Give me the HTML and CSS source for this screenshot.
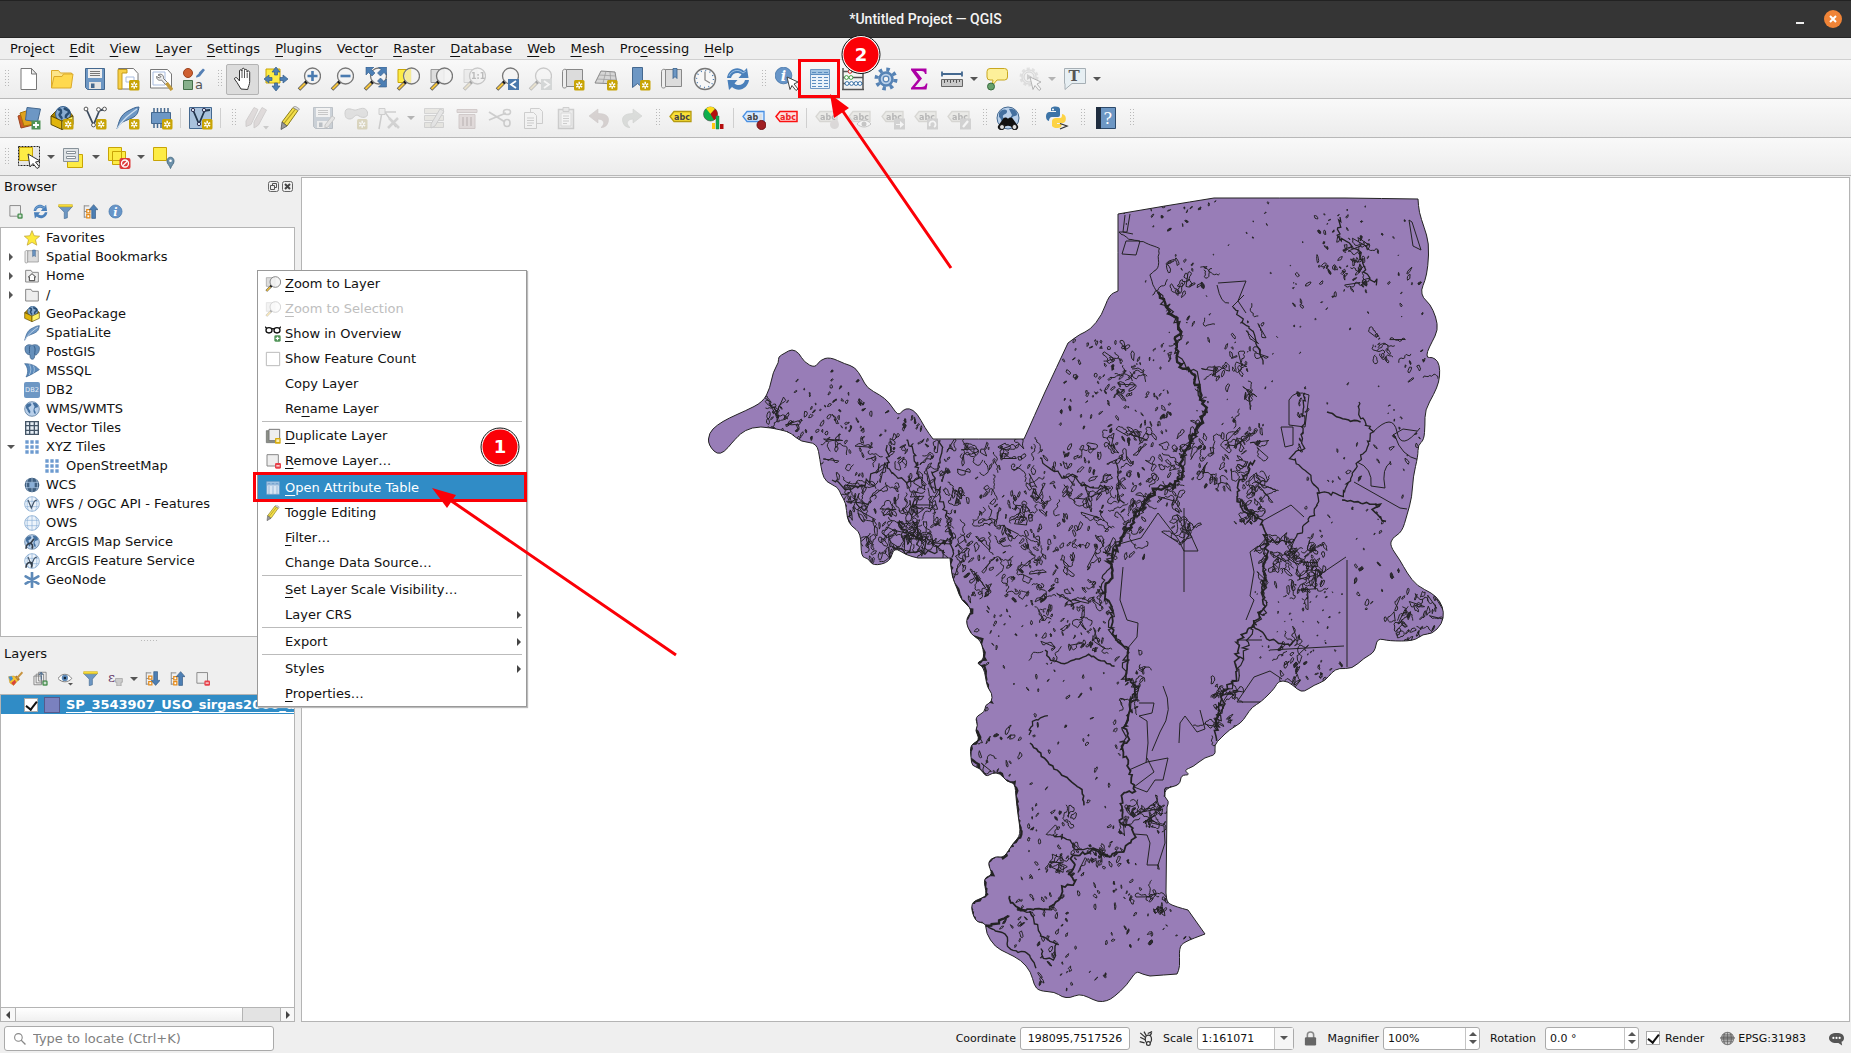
FILE: index.html
```html
<!DOCTYPE html>
<html lang="en">
<head>
<meta charset="utf-8">
<title>*Untitled Project — QGIS</title>
<link rel="stylesheet" href="styles.css">
</head>
<body>
<svg class="sprite" aria-hidden="true">
  <symbol id="star" viewBox="0 0 24 24"><rect x="13" y="13" width="10.500" height="10.500" rx="1.500" fill="#c8a406"/><path d="M18.200 14.800v7M15.200 16.600l6 3.500M15.200 20.100l6-3.500" stroke="#fff" stroke-width="1.500"/><circle cx="18.200" cy="18.300" r="1" fill="#c8a406"/></symbol>
  <symbol id="lens" viewBox="0 0 24 24"><path d="M10 14.500L2 22.500" stroke="#555" stroke-width="3.600"/><path d="M8 16.500l-5.500 5.500" stroke="#f3c33c" stroke-width="2.200"/><path d="M10.500 13.500l-2 2.500" stroke="#111" stroke-width="3"/><circle cx="15.500" cy="9" r="8" fill="#f3f3f3" fill-opacity=".85" stroke="#777" stroke-width="1.300"/></symbol>
  <symbol id="new" viewBox="0 0 24 24"><path d="M4 1.500h10.500l5 5.500v15.500H4z" fill="#fff" stroke="#777"/><path d="M14.500 1.500V7h5z" fill="#eee" stroke="#777"/></symbol>
  <symbol id="open" viewBox="0 0 24 24"><path d="M1.500 21V3.500h7l2 2.500h11v4" fill="#fce58a" stroke="#dba92a"/><path d="M1.500 21L4 9.500h8l1.500-2.500h9.500L21 21z" fill="#ffd94f" stroke="#dba92a"/></symbol>
  <symbol id="save" viewBox="0 0 24 24"><path d="M2.500 1.500h19v21h-17l-2-2z" fill="#6d97c4" stroke="#44688f"/><path d="M5 2h14v9H5z" fill="#eee"/><path d="M7 4.500h10M7 6.500h10M7 8.500h10" stroke="#777"/><path d="M6 15h12v7H6z" fill="#e4e4e4"/><path d="M8 16.500h3.500V21H8z" fill="#44688f"/></symbol>
  <symbol id="layout" viewBox="0 0 24 24"><path d="M2.500 1.500h15l4.500 5v15.500H2.500z" fill="#fff" stroke="#777"/><path d="M2 2.500h9v3.500H6V22H2z" fill="#f8d048" stroke="#c39b1a"/><path d="M10 10h8v5h-8z" fill="none" stroke="#a9bde0"/><use href="#star"/></symbol>
  <symbol id="layman" viewBox="0 0 24 24"><path d="M1.500 2.500h17l4 4.500v14H1.500z" fill="#fff" stroke="#777"/><path d="M4 5h12v13H4z" fill="none" stroke="#a9bde0"/><path d="M9 8c3-2 6 0 5.500 3.500l4 4-2 2-4-4.500c-2.500 1-5-.5-5-3.500l3 1.500 1.500-1.500z" fill="#eee" stroke="#777"/><path d="M17.500 16l5.500 7" stroke="#c39b3a" stroke-width="3.500"/></symbol>
  <symbol id="stylem" viewBox="0 0 24 24"><circle cx="6" cy="6" r="4.500" fill="#cf6032" stroke="#9c431e"/><path d="M14 10.500c0-3 3-3 3-5l4-4 2 1.500-4 5c-1 2-3 2-5 2.500z" fill="#5580b5"/><path d="M1.500 13.500h9v9h-9z" fill="#87b08c" stroke="#45704a"/><text x="13" y="22" class="t-a">a</text></symbol>
  <symbol id="hand" viewBox="0 0 24 24"><path d="M8 22L4 15.500 1.500 12c0-1.500 1.500-2 2.500-1l2.500 3V4c0-1.700 2.500-1.700 2.500 0V2.500C9 .800 11.500.800 11.500 2.500v1c0-1.500 2.500-1.500 2.500 0V5c0-1.500 2.700-1.500 2.700.500v9c0 3-1.500 5-2 8z" transform="translate(2 0)" fill="#fff" stroke="#333"/><path d="M11 4v7M13.500 4v7M16.200 5.500V11" stroke="#555"/></symbol>
  <symbol id="pansel" viewBox="0 0 24 24"><path d="M2 2h14v14H2z" fill="#fdec45" stroke="#c8a406"/><path d="M12 0l4 5h-2.500v3h-3V5H8zM12 24l4-5h-2.500v-3h-3v3H8zM0 12l5-4v2.500h3v3H5V16zM24 12l-5-4v2.500h-3v3h3V16z" fill="#4d7fb4" stroke="#355d88" stroke-width=".7"/></symbol>
  <symbol id="zin" viewBox="0 0 24 24"><use href="#lens"/><path d="M15.500 4v10M10.500 9h10" stroke="#4a7bb0" stroke-width="2.600"/></symbol>
  <symbol id="zout" viewBox="0 0 24 24"><use href="#lens"/><path d="M10.500 9h10" stroke="#4a7bb0" stroke-width="2.600"/></symbol>
  <symbol id="zfull" viewBox="0 0 24 24"><use href="#lens"/><path d="M3 0h8L8.500 2.500 12 6l-3 3-3.500-3.500L3 8zM23.500 0v8L21 5.500 17.500 9l-3-3L18 2.500 15.500 0zM23.500 20h-8l2.500-2.500-3.500-3.500 3-3 3.500 3.500 2.500-2.500z" fill="#4d7fb4" stroke="#355d88" stroke-width=".6"/></symbol>
  <symbol id="zsel" viewBox="0 0 24 24"><path d="M2 2.500h13v13H2z" fill="#fdec45" stroke="#c8a406"/><use href="#lens"/><path d="M15 1.800v14a7 7 0 0 1-6-6c-.5-4 2-7.500 6-8z" fill="#f5e87a" opacity=".7"/></symbol>
  <symbol id="zlay" viewBox="0 0 24 24"><path d="M2 2.500h13v13H2z" fill="#ddd" stroke="#999"/><use href="#lens"/></symbol>
  <symbol id="z11" viewBox="0 0 24 24"><use href="#zlay"/><text x="9" y="12" class="t-s">1:1</text></symbol>
  <symbol id="zlast" viewBox="0 0 24 24"><use href="#lens"/><path d="M13 12h11v11H13z" fill="#4a78ab"/><path d="M21 14l-5 3.500 5 3.500" fill="none" stroke="#fff" stroke-width="1.800"/></symbol>
  <symbol id="znext" viewBox="0 0 24 24"><use href="#lens"/><path d="M13 12h11v11H13z" fill="#9aa"/><path d="M16 14l5 3.500-5 3.500" fill="none" stroke="#fff" stroke-width="1.800"/></symbol>
  <symbol id="map" viewBox="0 0 24 24"><path d="M5.500 2.500h16v17H5z" fill="#dcdcdc" stroke="#888"/><path d="M5.500 2.500c-3-1-4 1-4 2v15c0 2 4 2 4 0z" fill="#eee" stroke="#888"/></symbol>
  <symbol id="nmap" viewBox="0 0 24 24"><use href="#map"/><use href="#star"/></symbol>
  <symbol id="n3d" viewBox="0 0 24 24"><path d="M7 4l14 1 2 12-22-1z" fill="#d6d6d6" stroke="#888"/><path d="M12 4l-3 12M16 5l1 12M5 8l17 1M3 12l19 1" fill="none" stroke="#999" stroke-width=".7"/><use href="#star"/></symbol>
  <symbol id="nbook" viewBox="0 0 24 24"><path d="M5.500.500h10v20l-5-4-5 4z" fill="#6d97c4" stroke="#44688f"/><use href="#star"/></symbol>
  <symbol id="book" viewBox="0 0 24 24"><use href="#map"/><path d="M13 1.500h4v10l-2-2-2 2z" fill="#6d97c4" stroke="#355d88" stroke-width=".8"/></symbol>
  <symbol id="clock" viewBox="0 0 24 24"><circle cx="12" cy="12" r="10.500" fill="#f7f7f7" stroke="#777" stroke-width="1.400"/><circle cx="12" cy="12" r="8.500" fill="none" stroke="#4a7bb0" stroke-width="1.400" stroke-dasharray="1 3.450"/><path d="M12 4.500V13l5 3" fill="none" stroke="#888" stroke-width="1.300"/></symbol>
  <symbol id="refresh" viewBox="0 0 24 24"><path d="M1 11C2 3 11-2 18 4l3-3 1.500 10H12.500l3-3.500C12 4.500 6 6 5 11z" fill="#4a80bb"/><path d="M23 13c-1 8-10 13-17 7l-3 3L1.500 13h10l-3 3.500C12 19.500 18 18 19 13z" fill="#4a80bb"/><path d="M3 9c2-5 9-8 14-3l3-2" fill="none" stroke="#9cc0e4"/></symbol>
  <symbol id="info" viewBox="0 0 24 24"><circle cx="12" cy="12" r="10.500" fill="#6795c8" stroke="#4373a8"/><text x="8.500" y="18.500" class="t-i">i</text></symbol>
  <symbol id="cur" viewBox="0 0 24 24"><path d="M12 10l11 5-4 2 4 5-2 1.500-4-5-2 4z" fill="#fff" stroke="#444"/></symbol>
  <symbol id="ident" viewBox="0 0 24 24"><use href="#info" width="19" height="19" x="-1" y="-1"/><use href="#cur"/></symbol>
  <symbol id="table" viewBox="0 0 24 24"><path d="M2.500 2.500h19v19h-19z" fill="#eaf2fa" stroke="#6d97c4"/><path d="M3 3h18v4H3z" fill="#9fc3e2"/><path d="M4 5.500h4M10 5.500h4M16 5.500h4M3 7.500h18M4 10.500h4M10 10.500h4M16 10.500h4M4 13.500h4M10 13.500h4M16 13.500h4M4 16.500h4M10 16.500h4M16 16.500h4M4 19.500h4M10 19.500h4M16 19.500h4" stroke="#5a8cc0"/></symbol>
  <symbol id="abacus" viewBox="0 0 24 24"><path d="M2 1v21M22 1v21M1 22.500h22M2 4.500h20M2 10.500h20M2 16.500h20" stroke="#555" stroke-width="1.500"/><g fill="#fff"><g stroke="#cc2222"><circle cx="9" cy="4.500" r="1.800"/></g><g stroke="#45a045"><circle cx="5.500" cy="10.500" r="1.900"/><circle cx="10" cy="10.500" r="1.900"/></g><g stroke="#3a73aa"><circle cx="6" cy="16.500" r="1.900"/><circle cx="10.500" cy="16.500" r="1.900"/><circle cx="15" cy="16.500" r="1.900"/><circle cx="19" cy="16.500" r="1.900"/></g></g></symbol>
  <symbol id="gear" viewBox="0 0 24 24"><circle cx="12" cy="12" r="9.500" fill="none" stroke="#5683b5" stroke-width="4" stroke-dasharray="3.400 4.060"/><circle cx="12" cy="12" r="6.500" fill="#b9d0ea" stroke="#5683b5" stroke-width="2.500"/><circle cx="12" cy="12" r="2.800" fill="#f4f4f4" stroke="#5683b5" stroke-width="1.200"/></symbol>
  <symbol id="sigma" viewBox="0 0 24 24"><path d="M4 1.500h15.500V7H18c-.5-2-1-3-4-3H9l6 7.500L8 20h6c3 0 4.500-1 5-3.500h1.500l-1 6H4V21l7-8.500L4 3z" fill="#ad00a6"/></symbol>
  <symbol id="ruler" viewBox="0 0 24 24"><path d="M2 7h20M2 4.500v5M22 4.500v5" stroke="#44688f" stroke-width="1.800"/><path d="M1.500 12.500h21v7h-21z" fill="#c9c9c9" stroke="#666"/><path d="M4.500 13v3M7.500 13v2M10.500 13v3M13.500 13v2M16.500 13v3M19.500 13v2" stroke="#555"/></symbol>
  <symbol id="tip" viewBox="0 0 24 24"><path d="M5 1.500h14.500q3 0 3 3v5.500q0 3-3 3H12L7 19l1-6H5q-3 0-3-3V4.500q0-3 3-3z" fill="#fdf09a" stroke="#c8a720"/><circle cx="6" cy="19.500" r="3.500" fill="#67a06c" stroke="#396b3e"/></symbol>
  <symbol id="action" viewBox="0 0 24 24"><circle cx="11" cy="10" r="8" fill="#ddd" stroke="#bbb" stroke-width="3" stroke-dasharray="3 2.030"/><circle cx="11" cy="10" r="7" fill="#ddd" stroke="#aaa"/><circle cx="11" cy="10" r="5" fill="#eee" stroke="#999"/><path d="M9 7l5 3-5 3z" fill="#888"/><use href="#cur"/></symbol>
  <symbol id="tnote" viewBox="0 0 24 24"><path d="M1.500 1.500h21v15H9l-7 6v-6h-.500z" fill="#e7eff3" stroke="#a6afb5"/><text x="5.500" y="14" class="t-T">T</text></symbol>
  <symbol id="dsm" viewBox="0 0 24 24"><path d="M1 10l10-4 5 13-12 3z" fill="#cf5a26" stroke="#9c431e"/><path d="M3 7l12-4 3 15-11 2z" fill="#e0a21c" stroke="#a87608"/><path d="M10 1.500L23.500 3l-3 13-12-2z" fill="#6d97c4" stroke="#44688f"/><path d="M14.500 14.500h9v9h-9z" fill="#4f9356"/><path d="M19 16v6M16 19h6" stroke="#fff" stroke-width="1.800"/></symbol>
  <symbol id="gpkg0" viewBox="0 0 24 24"><path d="M1 10l5-5h13l4 5-12 4z" fill="#a88200" stroke="#6b5200"/><circle cx="13" cy="8" r="7.500" fill="#88abd0" stroke="#345f8d"/><path d="M8 4c3-2 4 2 2 4s3 3 1 5M14 2c3 3 5 1 5 4s-4 1-3 6" stroke="#284d73" stroke-width="2.500" fill="none"/><path d="M1 10l11 5v8.500L1 18.500z" fill="#e0b50c" stroke="#5d4a05"/><path d="M12 15l11-5v8.500l-11 5z" fill="#fdf267" stroke="#5d4a05"/></symbol>
  <symbol id="gpkg" viewBox="0 0 24 24"><use href="#gpkg0"/><use href="#star"/></symbol>
  <symbol id="vee" viewBox="0 0 24 24"><path d="M3.500 3.500l7 15.500 5.500-13.500c1-2 3-2 6-2" fill="none" stroke="#3c4b5e" stroke-width="1.800"/><g fill="#fff" stroke="#555"><circle cx="3" cy="3" r="1.900"/><circle cx="10.500" cy="19" r="1.900"/><circle cx="15.500" cy="3.500" r="1.900"/><circle cx="21.500" cy="3" r="1.900"/></g></symbol>
  <symbol id="nshp" viewBox="0 0 24 24"><use href="#vee"/><use href="#star"/></symbol>
  <symbol id="feather" viewBox="0 0 24 24"><path d="M1 23C3 16 4 9 12 5c4-2 7-4 11-4-1 5-1 8-7 11-4 2-9 3-12 6z" fill="#6d97c4" stroke="#3b6391"/><path d="M1 23C6 14 13 9 21 3" fill="none" stroke="#cfe0f1" stroke-width="1.200"/></symbol>
  <symbol id="nlite" viewBox="0 0 24 24"><use href="#feather"/><use href="#star"/></symbol>
  <symbol id="chip" viewBox="0 0 24 24"><path d="M5 2v20M8.500 2v20M12 2v20M15.500 2v20M19 2v20" stroke="#44688f" stroke-width="1.500"/><path d="M2.500 6.500h19v11h-19z" fill="#6d97c4" stroke="#44688f"/><use href="#star"/></symbol>
  <symbol id="virt" viewBox="0 0 24 24"><path d="M.500 1.500h22v21H.500z" fill="#a9c2dd" stroke="#44688f"/><path d="M4 4l6 14 5-12c1-2 3-2 6-2" fill="none" stroke="#22364c" stroke-width="1.800"/><g fill="#d8e4f0" stroke="#335"><circle cx="4" cy="4" r="1.700"/><circle cx="15" cy="4" r="1.700"/><circle cx="10" cy="18" r="1.700"/></g><use href="#star"/></symbol>
  <symbol id="pencil" viewBox="0 0 24 24"><path d="M4 16L15 1.500l5 3L9 20z" fill="#f3df4b" stroke="#8a7c1c"/><path d="M6 17.500L17.500 3" stroke="#b49e1e" stroke-width="1.200"/><path d="M4 16l5 4-6 3.500z" fill="#999" stroke="#555" stroke-width=".8"/><path d="M15 1.500l2-1.500 4.500 3-1.500 1.500z" fill="#ddd" stroke="#888" stroke-width=".7"/></symbol>
  <symbol id="pencils" viewBox="0 0 24 24"><path d="M1 15L9 1.500l4 2-7 15-5 2zM9 16l8-14.500 4.500 2.500-8 15L9 22z" fill="#c9a9a9" stroke="#998888"/><path d="M18 20h6l-3 3.500z" fill="#888"/></symbol>
  <symbol id="saveed" viewBox="0 0 24 24"><use href="#save"/><path d="M14 19l7-9 3 2-7 9-3 1z" fill="#ccc" stroke="#777"/></symbol>
  <symbol id="addpoly" viewBox="0 0 24 24"><path d="M1 7c0-6 6-4 9-3s10-5 13 1-4 8-8 5-5 3-9 3-5-2-5-6z" fill="#bbb" stroke="#888"/><use href="#star"/></symbol>
  <symbol id="vertex" viewBox="0 0 24 24"><path d="M5 6L2 23M5 6h14M7 5L19 21" stroke="#888" stroke-width="1.500"/><path d="M2 2.500h6v6H2z" fill="#ddd" stroke="#888"/><path d="M11 22l10-10M12 12l10 10" stroke="#999" stroke-width="2.500"/></symbol>
  <symbol id="multi" viewBox="0 0 24 24"><path d="M2.500 2.500h19v5h-19zM2.500 9.500h19v5h-19zM2.500 16.500h19v5h-19z" fill="#d5d0b4" stroke="#999"/><path d="M9 18L18 3l4 2-9 15-4 2z" fill="#ccc" stroke="#888"/></symbol>
  <symbol id="trash" viewBox="0 0 24 24"><path d="M2 3.500h20v3H2zM4 8.500h16v14H4z" fill="#d7a9a9" stroke="#a97a7a"/><path d="M8 11v9M12 11v9M16 11v9" stroke="#a06c6c" stroke-width="2"/></symbol>
  <symbol id="cut" viewBox="0 0 24 24"><path d="M1 6l16 10M1 14l17-7" stroke="#888" stroke-width="1.800"/><g fill="none" stroke="#888" stroke-width="1.600"><ellipse cx="19" cy="6" rx="3.500" ry="2.500"/><ellipse cx="19" cy="17" rx="3" ry="3.500"/></g></symbol>
  <symbol id="copy" viewBox="0 0 24 24"><path d="M9.500 2.500h9l3 3v12h-12z" fill="#eee" stroke="#888"/><path d="M3.500 6.500h9l3 3v13h-12z" fill="#f4f4f4" stroke="#888"/><path d="M6 12h7M6 14.500h7M6 17h7M6 19.500h5" stroke="#888"/></symbol>
  <symbol id="paste" viewBox="0 0 24 24"><path d="M4.500 3.500h15v19h-15z" fill="#ddd" stroke="#888" stroke-width="1.500"/><path d="M7 7h10v13H7z" fill="#f8f8f8" stroke="#aaa"/><path d="M9 1.500h6v4H9z" fill="#ccc" stroke="#888"/><path d="M9 10h6M9 12.500h6M9 15h6M9 17.500h4" stroke="#888"/></symbol>
  <symbol id="undo" viewBox="0 0 24 24"><path d="M2 10l9-7v4.500c8 0 12 3 10 9-1 3-3 5-7 5 4-3 4-8-3-8.500V17z" fill="#b58f8b" stroke="#9a7874" stroke-width=".6"/></symbol>
  <symbol id="redo" viewBox="0 0 24 24"><path d="M22 10l-9-7v4.500c-8 0-12 3-10 9 1 3 3 5 7 5-4-3-4-8 3-8.500V17z" fill="#a9b5a9" stroke="#8a958a" stroke-width=".6"/></symbol>
  <symbol id="abc" viewBox="0 0 24 24"><path d="M1 10.500l4-5h17v10H5z" fill="#fae037" stroke="#b59a10" stroke-width="1.300"/><text x="5" y="13.500" class="t-b">abc</text></symbol>
  <symbol id="pie" viewBox="0 0 24 24"><circle cx="8.500" cy="8" r="7" fill="#0eae4c" stroke="#444" stroke-width=".6"/><path d="M8.500 8L4 2.500C7 0 11 0 13 3z" fill="#ffdc1c"/><path d="M8.500 8L13 3c4 3 3 9-1 11z" fill="#b50e0e"/><path d="M10 17h3v6h-3z" fill="#ffc814"/><path d="M14 10h3v13h-3z" fill="#0eae4c" stroke="#275" stroke-width=".5"/><path d="M18 18h3.500v5H18z" fill="#b50e0e"/></symbol>
  <symbol id="labpin" viewBox="0 0 24 24"><path d="M1 10.500l4-5h17v10H5z" fill="#d9ebff" stroke="#4a90e2" stroke-width="1.300"/><text x="5" y="13.500" class="t-b">ab</text><path d="M18.500 8v10" stroke="#ddd" stroke-width="2.500"/><circle cx="19.500" cy="19" r="4.500" fill="#a01f23" stroke="#701015"/></symbol>
  <symbol id="labred" viewBox="0 0 24 24"><path d="M1 10.500l4-5h17v10H5z" fill="#fdd" stroke="#fb1010" stroke-width="1.500"/><text x="5" y="13.500" class="t-b t-red">abc</text></symbol>
  <symbol id="lab0" viewBox="0 0 24 24"><path d="M1 10.500l4-5h17v10H5z" fill="#dbd8c4" stroke="#a8a48c" stroke-width="1.300"/><text x="5" y="13.500" class="t-b">abc</text></symbol>
  <symbol id="labg1" viewBox="0 0 24 24"><use href="#lab0"/><circle cx="19.500" cy="18.500" r="4.500" fill="#bbaaaa"/></symbol>
  <symbol id="labg2" viewBox="0 0 24 24"><use href="#lab0"/><path d="M9 18c4-5 10-5 14 0-4 4-10 4-14 0z" fill="#fff" stroke="#777"/><circle cx="16" cy="18" r="2.500" fill="#777"/></symbol>
  <symbol id="labg3" viewBox="0 0 24 24"><use href="#lab0"/><path d="M13 12.500h11v11H13z" fill="#999"/><path d="M15 18h4v-3l4 3.500-4 3.500v-3h-4z" fill="#fff"/></symbol>
  <symbol id="labg4" viewBox="0 0 24 24"><use href="#lab0"/><path d="M13 12.500h11v11H13z" fill="#999"/><path d="M16 20a3 3 0 1 1 4 1" fill="none" stroke="#fff" stroke-width="1.800"/></symbol>
  <symbol id="labg5" viewBox="0 0 24 24"><use href="#lab0"/><path d="M13 12.500h11v11H13z" fill="#999"/><path d="M16 21l5-6" stroke="#fff" stroke-width="2.200"/></symbol>
  <symbol id="globe" viewBox="0 0 24 24"><circle cx="12" cy="12" r="11" fill="#b9d0ea" stroke="#44688f"/><path d="M3 7c3-5 9-4 8-1s-5 2-4 5 4 3 2 8c-4-2-3-6-6-8zM13 3c4-1 8 2 8 5s-4 1-5 4 3 3 1 8c-4-3-3-9-1-11z" fill="#44709f"/></symbol>
  <symbol id="meta" viewBox="0 0 24 24"><use href="#globe"/><path d="M7 13c1-2 4-2 5 0 1-2 4-2 5 0l5 7a3 3 0 0 1-6 2c-1-3-7-3-8 0a3 3 0 0 1-6-2z" fill="#111"/><circle cx="6" cy="21" r="2.500" fill="#ddd" stroke="#111"/><circle cx="18.500" cy="21" r="2.500" fill="#ddd" stroke="#111"/></symbol>
  <symbol id="python" viewBox="0 0 24 24"><path d="M6 2c3-2 8-2 9 1v6c0 2-2 2-3 2H7c-2 0-3 2-3 4-4 0-4-9 0-9h7V5H6z" fill="#3d74a7"/><path d="M16 21c-3 2-8 1-9-1v-5c0-2 2-3 4-3h4c2 0 2-2 2-4 5 0 5 9 1 9h-6v1h5z" fill="#fdd345"/><circle cx="8" cy="3.500" r="1" fill="#fff"/><path d="M15 17.500l7 2.500-7 3" fill="none" stroke="#333" stroke-width="1.300"/></symbol>
  <symbol id="help" viewBox="0 0 24 24"><path d="M2.500 1.500h19v21h-19z" fill="#6d97c4" stroke="#2d4a6b"/><path d="M2 1h5v22H2z" fill="#1f2d3f"/><text x="9.500" y="17.500" class="t-q">?</text></symbol>
  <symbol id="selrect" viewBox="0 0 24 24"><path d="M1.500 1.500h21v19h-21z" fill="#e6e6e6" stroke="#222" stroke-dasharray="2 1"/><path d="M2.500 2.500h13v13h-13z" fill="#fdec45" stroke="#c8a406"/><path d="M11 9l12 7-4.500 1 4 5-2.500 1.500-4-5-3 3.500z" fill="#fff" stroke="#333"/></symbol>
  <symbol id="selval" viewBox="0 0 24 24"><path d="M5.500 9.500h15v13h-15z" fill="#fdec45" stroke="#c8a406"/><path d="M1.500 3.500h15v13h-15z" fill="#dfe3e6" stroke="#88929a"/><path d="M4.500 6.500h9v2h-9zM4.500 11.500h9v2h-9z" fill="#fff" stroke="#88929a"/></symbol>
  <symbol id="desel" viewBox="0 0 24 24"><path d="M1.500 2.500h13v13h-13zM5.500 6.500h13v13h-13z" fill="#fdec45" stroke="#c8a406"/><rect x="12.500" y="13" width="11" height="11" rx="2" fill="#dd3a3a"/><circle cx="18" cy="18.500" r="3.500" fill="none" stroke="#fff" stroke-width="1.300"/><path d="M15.500 21l5-5" stroke="#fff" stroke-width="1.300"/></symbol>
  <symbol id="selloc" viewBox="0 0 24 24"><path d="M1.500 2.500h13v13h-13z" fill="#fdec45" stroke="#c8a406"/><path d="M15 16c0-5 7-5 7 0 0 3-2.500 4-3.500 7.500C17.500 20 15 19 15 16z" fill="#6d91ab" stroke="#4d7088"/><circle cx="18.500" cy="15.800" r="1.300" fill="#fff"/></symbol>
  <symbol id="addl" viewBox="0 0 24 24"><path d="M3 2.500h17v17H3z" fill="#eee" stroke="#888" stroke-width="1.500"/><rect x="15" y="15" width="8.500" height="8.500" rx="2" fill="#4f9356"/><path d="M19.200 17v4.500M17 19.200h4.500" stroke="#fff" stroke-width="1.500"/></symbol>
  <symbol id="reml" viewBox="0 0 24 24"><path d="M3 2.500h17v17H3z" fill="#eee" stroke="#888" stroke-width="1.500"/><rect x="15" y="15" width="9" height="8.500" rx="2" fill="#e8414a"/><path d="M17 19.300h5" stroke="#fff" stroke-width="1.800"/></symbol>
  <symbol id="dupl" viewBox="0 0 24 24"><path d="M2 4h14v18H2z" fill="#8b8f86" stroke="#666"/><path d="M6 2h16v17H6z" fill="#eee" stroke="#777" stroke-width="1.500"/><rect x="15" y="15" width="8.500" height="8.500" rx="1" fill="#d6ab10"/><path d="M17 17h4.500v4H17z" fill="#fff0b0"/></symbol>
  <symbol id="filter" viewBox="0 0 24 24"><path d="M1 4h22l-8 9v9l-5 1.500V13z" fill="#6d97c4" stroke="#44688f"/><path d="M1 1h22v3.500H1z" fill="#fbe13a" stroke="#c8a406" stroke-width=".8"/></symbol>
  <symbol id="coll" viewBox="0 0 24 24"><path d="M2 2v20M2 3h8M2 12h5M2 21h5" stroke="#888" stroke-width="1.500" fill="none"/><path d="M6 9h5v5H6zM6 17h5v5H6z" fill="#fff" stroke="#e58b1a" stroke-width="2"/><path d="M17 1l7 8h-4v14h-6V9h-4z" fill="#4d7fb4" stroke="#2f557e"/></symbol>
  <symbol id="expa" viewBox="0 0 24 24"><path d="M2 2v20M2 3h8M2 12h5M2 21h5" stroke="#888" stroke-width="1.500" fill="none"/><path d="M6 8h5v5H6zM6 17h5v5H6z" fill="#fff" stroke="#e58b1a" stroke-width="2"/><path d="M17 23l7-8h-4V1h-6v14h-4z" fill="#4d7fb4" stroke="#2f557e"/></symbol>
  <symbol id="fav" viewBox="0 0 24 24"><path d="M12 1l3.200 7.600 8.300.700-6.300 5.400 2 8.100L12 18.500l-7.200 4.300 2-8.100L.500 9.300l8.300-.700z" fill="#fdea3c" stroke="#b99a2a"/></symbol>
  <symbol id="fold" viewBox="0 0 24 24"><path d="M2.500 21V3.500h8l2 3h9V21z" fill="#eee" stroke="#888" stroke-width="1.500"/></symbol>
  <symbol id="home" viewBox="0 0 24 24"><use href="#fold"/><path d="M6 14l6-5.500 6 5.500M8 13v6h8v-6" fill="#fff" stroke="#333" stroke-width="1.400"/></symbol>
  <symbol id="pg" viewBox="0 0 24 24"><path d="M2 4c3-4 8-3 10-2 4-2 10-1 11 3 1 5-2 9-4 11l-3 1c0 4-1 6-4 6-3-1-3-4-3-7-5 1-9-6-7-12z" fill="#6690bb" stroke="#2f557e"/><path d="M9 3c-2 3 0 7-1 11M15 3c3 4 1 8 1 13" fill="none" stroke="#2f557e" stroke-width="1.300"/></symbol>
  <symbol id="ms" viewBox="0 0 24 24"><path d="M1 1c8 0 16 2 22 9-6 4-13 8-20 11C7 14 6 7 1 1z" fill="#5b8abb" stroke="#3b6391"/><path d="M8 2c3 5 3 10 0 16M14 4c2 4 2 7 0 12" stroke="#c3d6ea" fill="none"/></symbol>
  <symbol id="db2" viewBox="0 0 24 24"><rect width="24" height="24" rx="3" fill="#6d97c4"/><text x="1.500" y="15.500" class="t-db">DB2</text></symbol>
  <symbol id="vt" viewBox="0 0 24 24"><path d="M2.500 2.500h19v19h-19z" fill="#e4ecf4" stroke="#445566" stroke-width="2"/><path d="M8.500 2v20M15.500 2v20M2 8.500h20M2 15.500h20" stroke="#445566" stroke-width="2"/></symbol>
  <symbol id="xyz" viewBox="0 0 24 24"><path d="M2 2h5v5H2zM9.500 2h5v5h-5zM17 2h5v5h-5zM2 9.500h5v5H2zM9.500 9.500h5v5h-5zM17 9.500h5v5h-5zM2 17h5v5H2zM9.500 17h5v5h-5zM17 17h5v5h-5z" fill="#6d9bd0"/></symbol>
  <symbol id="wcs" viewBox="0 0 24 24"><circle cx="12" cy="12" r="11" fill="#3f5f80"/><path d="M2 8h20M2 16h20M12 1v22M6 3c-3 6-3 12 0 18M18 3c3 6 3 12 0 18" stroke="#b9d0ea" fill="none"/><path d="M8 8h8v8H8z" fill="#89aed6"/></symbol>
  <symbol id="ows" viewBox="0 0 24 24"><circle cx="12" cy="12" r="11" fill="#edf4fb" stroke="#6d97c4"/><path d="M2 8h20M2 16h20M12 1v22M7 2c-3 6-3 14 0 20M17 2c3 6 3 14 0 20" stroke="#8db1d8" fill="none"/></symbol>
  <symbol id="wfs" viewBox="0 0 24 24"><use href="#ows"/><path d="M6 6l5 12 4-9c1-2 3-3 5-3" stroke="#44566b" stroke-width="1.800" fill="none"/></symbol>
  <symbol id="ams" viewBox="0 0 24 24"><use href="#globe"/><path d="M3 22c0-5 3-8 6-8s5 3 3 8M10 14l5-7" stroke="#333d49" stroke-width="2.500" fill="none"/></symbol>
  <symbol id="afs" viewBox="0 0 24 24"><use href="#wfs"/><path d="M3 22c0-5 3-8 6-8s4 3 2 8" stroke="#333d49" stroke-width="2.500" fill="none"/></symbol>
  <symbol id="gn" viewBox="0 0 24 24"><path d="M12 1v22M2.500 6.500l19 11M2.500 17.500l19-11" stroke="#5d89b8" stroke-width="4" stroke-linecap="round"/></symbol>
  <symbol id="brush" viewBox="0 0 24 24"><path d="M1 9l9-1 6 7-7 8-6-4z" fill="#f4c531" stroke="#b98a1b" stroke-width=".8"/><path d="M1 9l5-.500 2 4-4 4z" fill="#3e8fd8"/><path d="M5 19l6-5 2 4-4 5z" fill="#d8443d"/><path d="M11 9l3-2 5 6-3 3z" fill="#b3782b"/><path d="M14 12l9-10" stroke="#c89440" stroke-width="3"/></symbol>
  <symbol id="grp" viewBox="0 0 24 24"><path d="M1.500 8h12v14h-12zM5 5h12v14H5zM9 2h12v14H9z" fill="#eee" stroke="#777" stroke-width="1.300"/><path d="M13 3v11M10 6l3-4 3 4" stroke="#355d88" fill="none" stroke-width="1.500"/><rect x="15" y="15" width="8.500" height="8.500" rx="2" fill="#4f9356"/><path d="M19.200 17v4.500M17 19.200h4.500" stroke="#fff" stroke-width="1.500"/></symbol>
  <symbol id="eye" viewBox="0 0 24 24"><path d="M0 12c6-9 16-9 22 0-6 7-16 7-22 0z" fill="#fff" stroke="#777" stroke-width="1.500"/><circle cx="11" cy="11" r="5" fill="#5d89b8"/><circle cx="11" cy="11" r="2" fill="#123"/><path d="M16 19h8l-4 4z" fill="#555"/></symbol>
  <symbol id="eps" viewBox="0 0 24 24"><text x="0" y="17" class="t-e">ε</text><path d="M12 12h11v6h-2v6h-7v-6h-2z" fill="#ccc" stroke="#999"/></symbol>
  <symbol id="glasses" viewBox="0 0 24 24"><path d="M0 1l3 3M24 1l-3 3M9 5q3-2 6 0" fill="none" stroke="#111" stroke-width="2"/><g fill="#fff" stroke="#111" stroke-width="2"><ellipse cx="6" cy="6.500" rx="4.500" ry="4"/><ellipse cx="18" cy="6.500" rx="4.500" ry="4"/></g><rect x="14" y="14" width="9.500" height="9.500" rx="2" fill="#4f9356"/><path d="M18.700 16v5.500M16 18.700h5.500" stroke="#fff" stroke-width="1.800"/></symbol>
  <symbol id="box" viewBox="0 0 24 24"><path d="M2 2h20v20H2z" fill="#fff" stroke="#bbb" stroke-width="1.500"/></symbol>
  <symbol id="search" viewBox="0 0 24 24"><circle cx="10" cy="10" r="7" fill="none" stroke="#888" stroke-width="2"/><path d="M15 15l8 8" stroke="#888" stroke-width="2.500"/></symbol>
  <symbol id="mouse" viewBox="0 0 24 24"><path d="M2 3l9 8M8 1l5 9M2 10l8 4M1 17l8 2M14 4l7-3M20 3l-8 18" stroke="#333" stroke-width="2"/><ellipse cx="15" cy="13" rx="5" ry="6.500" fill="#eee" stroke="#333" stroke-width="2"/><circle cx="15" cy="20" r="3" fill="#fff" stroke="#333" stroke-width="2"/></symbol>
  <symbol id="lock" viewBox="0 0 24 24"><path d="M7 11V6c0-6 10-6 10 0v5" fill="none" stroke="#888" stroke-width="2.500"/><rect x="3" y="10" width="18" height="13" rx="2" fill="#666"/></symbol>
  <symbol id="crs" viewBox="0 0 24 24"><circle cx="12" cy="12" r="10" fill="#c4c4c4" stroke="#666" stroke-width="1.300"/><path d="M0 11l5-4h14l5 4-5 4H5z" fill="#8a8a8a"/><path d="M0 11h24M4 6h16M4 17h16M12 2v20M8 3c-3 6-3 12 0 18M16 3c3 6 3 12 0 18" stroke="#555" fill="none"/></symbol>
  <symbol id="msg" viewBox="0 0 24 24"><path d="M12 3c8 0 12 3 12 8 0 3-1 5-4 6l1 6-6-4c-10 1-15-3-15-8s5-8 12-8z" fill="#555"/><circle cx="7" cy="11" r="1.700" fill="#fff"/><circle cx="12" cy="11" r="1.700" fill="#fff"/><circle cx="17" cy="11" r="1.700" fill="#fff"/></symbol>
</svg>

<div class="app">
  <header class="titlebar">
    <h1>*Untitled Project — QGIS</h1>
    <div class="winbtns"><button class="min" aria-label="Minimize"></button><button class="close" aria-label="Close"><svg viewBox="0 0 18 18"><path d="M6 6l6 6M12 6l-6 6" stroke="#fff" stroke-width="2"/></svg></button></div>
  </header>
  <nav class="menubar">
    <button>Pro<u>j</u>ect</button><button><u>E</u>dit</button><button><u>V</u>iew</button><button><u>L</u>ayer</button><button><u>S</u>ettings</button><button><u>P</u>lugins</button><button>Vect<u>o</u>r</button><button><u>R</u>aster</button><button><u>D</u>atabase</button><button><u>W</u>eb</button><button><u>M</u>esh</button><button>Pro<u>c</u>essing</button><button><u>H</u>elp</button>
  </nav>
  <div class="toolrow">
    <div class="toolbar"><i class="grip"></i>
      <button aria-label="New Project"><svg><use href="#new"/></svg></button><button aria-label="Open Project"><svg><use href="#open"/></svg></button><button aria-label="Save Project"><svg><use href="#save"/></svg></button><button aria-label="New Print Layout"><svg><use href="#layout"/></svg></button><button aria-label="Layout Manager"><svg><use href="#layman"/></svg></button><button aria-label="Style Manager"><svg><use href="#stylem"/></svg></button>
    </div>
    <div class="toolbar"><i class="grip"></i>
      <button class="on" aria-label="Pan Map"><svg><use href="#hand"/></svg></button><button aria-label="Pan to Selection"><svg><use href="#pansel"/></svg></button><button aria-label="Zoom In"><svg><use href="#zin"/></svg></button><button aria-label="Zoom Out"><svg><use href="#zout"/></svg></button><button aria-label="Zoom Full"><svg><use href="#zfull"/></svg></button><button aria-label="Zoom to Selection"><svg><use href="#zsel"/></svg></button><button aria-label="Zoom to Layer"><svg><use href="#zlay"/></svg></button><button disabled aria-label="Native Resolution"><svg><use href="#z11"/></svg></button><button aria-label="Zoom Last"><svg><use href="#zlast"/></svg></button><button disabled aria-label="Zoom Next"><svg><use href="#znext"/></svg></button><button aria-label="New Map View"><svg><use href="#nmap"/></svg></button><button aria-label="New 3D Map View"><svg><use href="#n3d"/></svg></button><button aria-label="New Spatial Bookmark"><svg><use href="#nbook"/></svg></button><button aria-label="Show Bookmarks"><svg><use href="#book"/></svg></button><button aria-label="Temporal Controller"><svg><use href="#clock"/></svg></button><button aria-label="Refresh"><svg><use href="#refresh"/></svg></button>
    </div>
    <div class="toolbar"><i class="grip"></i>
      <button aria-label="Identify Features"><svg><use href="#ident"/></svg></button><button aria-label="Open Attribute Table"><svg><use href="#table"/></svg></button><button aria-label="Field Calculator"><svg><use href="#abacus"/></svg></button><button aria-label="Toolbox"><svg><use href="#gear"/></svg></button><button aria-label="Statistics"><svg><use href="#sigma"/></svg></button><button aria-label="Measure"><svg><use href="#ruler"/></svg></button><i class="drop"></i><button aria-label="Map Tips"><svg><use href="#tip"/></svg></button><button disabled aria-label="Run Action"><svg><use href="#action"/></svg></button><i class="drop dim"></i><button aria-label="Text Annotation"><svg><use href="#tnote"/></svg></button><i class="drop"></i>
    </div>
  </div>
  <div class="toolrow">
    <div class="toolbar"><i class="grip"></i>
      <button aria-label="Data Source Manager"><svg><use href="#dsm"/></svg></button><button aria-label="New GeoPackage Layer"><svg><use href="#gpkg"/></svg></button><button aria-label="New Shapefile Layer"><svg><use href="#nshp"/></svg></button><button aria-label="New SpatiaLite Layer"><svg><use href="#nlite"/></svg></button><button aria-label="New Scratch Layer"><svg><use href="#chip"/></svg></button><i class="sep"></i><button aria-label="New Virtual Layer"><svg><use href="#virt"/></svg></button><i class="sep"></i>
    </div>
    <div class="toolbar"><i class="grip"></i>
      <button disabled aria-label="Current Edits"><svg><use href="#pencils"/></svg></button><button aria-label="Toggle Editing"><svg><use href="#pencil"/></svg></button><button disabled aria-label="Save Edits"><svg><use href="#saveed"/></svg></button><button disabled aria-label="Add Polygon"><svg><use href="#addpoly"/></svg></button><button disabled aria-label="Vertex Tool"><svg><use href="#vertex"/></svg></button><i class="drop dim"></i><button disabled aria-label="Modify Attributes"><svg><use href="#multi"/></svg></button><button disabled aria-label="Delete Selected"><svg><use href="#trash"/></svg></button><button disabled aria-label="Cut"><svg><use href="#cut"/></svg></button><button disabled aria-label="Copy"><svg><use href="#copy"/></svg></button><button disabled aria-label="Paste"><svg><use href="#paste"/></svg></button><button disabled aria-label="Undo"><svg><use href="#undo"/></svg></button><button disabled aria-label="Redo"><svg><use href="#redo"/></svg></button>
    </div>
    <div class="toolbar"><i class="grip"></i>
      <button aria-label="Label Options"><svg><use href="#abc"/></svg></button><button aria-label="Diagram Options"><svg><use href="#pie"/></svg></button><i class="sep"></i><button aria-label="Highlight Pinned Labels"><svg><use href="#labpin"/></svg></button><button aria-label="Toggle Unplaced Labels"><svg><use href="#labred"/></svg></button><i class="sep"></i><button disabled aria-label="Pin Labels"><svg><use href="#labg1"/></svg></button><button disabled aria-label="Show Labels"><svg><use href="#labg2"/></svg></button><button disabled aria-label="Move Label"><svg><use href="#labg3"/></svg></button><button disabled aria-label="Rotate Label"><svg><use href="#labg4"/></svg></button><button disabled aria-label="Change Label"><svg><use href="#labg5"/></svg></button>
    </div>
    <div class="toolbar"><i class="grip"></i><button aria-label="MetaSearch"><svg><use href="#meta"/></svg></button></div>
    <div class="toolbar"><i class="grip"></i><button aria-label="Python Console"><svg><use href="#python"/></svg></button></div>
    <div class="toolbar"><i class="grip"></i><button aria-label="Help Contents"><svg><use href="#help"/></svg></button></div>
    <i class="grip"></i>
  </div>
  <div class="toolrow last">
    <div class="toolbar"><i class="grip"></i>
      <button aria-label="Select Features"><svg><use href="#selrect"/></svg></button><i class="drop"></i><button aria-label="Select by Value"><svg><use href="#selval"/></svg></button><i class="drop"></i><button aria-label="Deselect Features"><svg><use href="#desel"/></svg></button><i class="drop"></i><button aria-label="Select by Location"><svg><use href="#selloc"/></svg></button>
    </div>
  </div>

  <main class="work">
    <aside class="docks">
      <section class="dock browser">
        <div class="dockhead"><h2>Browser</h2><button aria-label="Float"><svg viewBox="0 0 11 11"><rect x=".5" y=".5" width="10" height="10" rx="2" fill="none" stroke="#666"/><path d="M2.500 4.500h4v4h-4zM4.500 4.500v-2h4v4h-2" fill="none" stroke="#555"/></svg></button><button aria-label="Close panel"><svg viewBox="0 0 11 11"><rect x=".5" y=".5" width="10" height="10" rx="2" fill="none" stroke="#666"/><path d="M3 3l5 5M8 3l-5 5" stroke="#444" stroke-width="2"/></svg></button></div>
        <div class="docktools"><button aria-label="Add Layers"><svg><use href="#addl"/></svg></button><button aria-label="Refresh browser"><svg><use href="#refresh"/></svg></button><button aria-label="Filter Browser"><svg><use href="#filter"/></svg></button><button aria-label="Collapse All"><svg><use href="#coll"/></svg></button><button aria-label="Properties Widget"><svg><use href="#info"/></svg></button></div>
        <ul class="tree">
          <li><i></i><svg><use href="#fav"/></svg>Favorites</li>
          <li><i class="shut"></i><svg><use href="#book"/></svg>Spatial Bookmarks</li>
          <li><i class="shut"></i><svg><use href="#home"/></svg>Home</li>
          <li><i class="shut"></i><svg><use href="#fold"/></svg>/</li>
          <li><i></i><svg><use href="#gpkg0"/></svg>GeoPackage</li>
          <li><i></i><svg><use href="#feather"/></svg>SpatiaLite</li>
          <li><i></i><svg><use href="#pg"/></svg>PostGIS</li>
          <li><i></i><svg><use href="#ms"/></svg>MSSQL</li>
          <li><i></i><svg><use href="#db2"/></svg>DB2</li>
          <li><i></i><svg><use href="#globe"/></svg>WMS/WMTS</li>
          <li><i></i><svg><use href="#vt"/></svg>Vector Tiles</li>
          <li><i class="openi"></i><svg><use href="#xyz"/></svg>XYZ Tiles</li>
          <li class="child"><i></i><svg><use href="#xyz"/></svg>OpenStreetMap</li>
          <li><i></i><svg><use href="#wcs"/></svg>WCS</li>
          <li><i></i><svg><use href="#wfs"/></svg>WFS / OGC API - Features</li>
          <li><i></i><svg><use href="#ows"/></svg>OWS</li>
          <li><i></i><svg><use href="#ams"/></svg>ArcGIS Map Service</li>
          <li><i></i><svg><use href="#afs"/></svg>ArcGIS Feature Service</li>
          <li><i></i><svg><use href="#gn"/></svg>GeoNode</li>
        </ul>
      </section>
      <div class="splitter"></div>
      <section class="dock layers">
        <div class="dockhead"><h2>Layers</h2></div>
        <div class="docktools"><button aria-label="Layer Styling"><svg><use href="#brush"/></svg></button><button aria-label="Add Group"><svg><use href="#grp"/></svg></button><button aria-label="Map Themes"><svg><use href="#eye"/></svg></button><button aria-label="Filter Legend"><svg><use href="#filter"/></svg></button><button aria-label="Filter by Expression"><svg><use href="#eps"/></svg></button><i class="drop"></i><button aria-label="Expand All"><svg><use href="#expa"/></svg></button><button aria-label="Collapse all layers"><svg><use href="#coll"/></svg></button><button aria-label="Remove Layer"><svg><use href="#reml"/></svg></button></div>
        <div class="layerbox">
          <label class="layer"><input type="checkbox" class="check" checked><span class="swatch"></span><span class="lname">SP_3543907_USO_sirgas2000_utm23s</span></label>
          <div class="hscroll"><button aria-label="Scroll left"><i class="la"></i></button><span></span><button aria-label="Scroll right"><i class="ra"></i></button></div>
        </div>
      </section>
    </aside>
    <section class="canvas">
      <svg class="map" viewBox="302 178 1547 843" preserveAspectRatio="xMinYMin meet" role="img" aria-label="Land use map">
        <defs><clipPath id="area"><use href="#outline"/></clipPath></defs>
        <path id="outline" fill="#987db7" stroke="#232323" stroke-linejoin="round" d="M1118 214L1165 206 1214 198 1345 198 1418 199 1419 212 1424 227 1429 243 1428 267 1425 281 1421 290 1423 298 1430 304 1436 317 1438 330 1432 342 1427 352 1427 358 1432 357 1438 361 1440 370 1439 382 1434 394 1425 410 1425 425 1424 440 1418 445 1418 456 1413 477 1412 497 1407 515 1402 532 1392 538 1390 546 1400 560 1407 573 1417 586 1432 593 1440 601 1444 612 1442 624 1432 634 1423 634 1414 641 1389 641 1377 638 1375 652 1364 658 1352 669 1339 668 1332 672 1325 681 1314 685 1304 692 1298 690 1288 681 1278 681 1275 688 1261 702 1252 707 1246 716 1241 723 1229 730 1221 738 1214 745 1216 755 1205 757 1193 767 1184 770 1190 775 1181 775 1180 785 1166 788 1164 797 1169 801 1167 807 1166 893 1167 903 1177 907 1188 910 1205 934 1184 942 1179 948 1180 967 1177 974 1150 976 1142 974 1136 971 1127 985 1114 997 1107 1001 1098 1002 1088 997 1079 994 1070 998 1062 997 1055 992 1039 991 1034 985 1031 972 1021 960 1007 953 995 947 986 933 986 923 975 922 970 903 982 898 987 895 983 878 993 875 987 862 996 856 1004 858 1013 843 1021 835 1018 815 1016 798 1015 783 1007 782 1000 773 992 773 986 777 980 768 972 766 971 758 970 745 980 740 975 730 978 726 975 717 985 712 985 705 992 702 992 693 987 687 984 667 976 663 985 659 981 640 971 635 965 620 973 610 961 600 957 588 952 577 950 558 918 558 906 555 894 547 890 562 873 566 868 558 861 557 861 533 851 526 847 518 846 503 841 495 838 487 826 482 822 473 820 460 817 443 801 442 791 433 782 430 760 426 745 430 736 438 720 457 708 445 709 433 717 425 729 418 745 411 763 402 770 388 773 372 779 362 778 357 785 353 792 349 799 353 804 362 815 368 820 360 830 357 845 364 855 367 862 378 867 388 880 395 889 402 898 416 903 410 909 408 917 413 925 428 933 439 1024 439 1045 392 1068 343 1080 334 1090 330 1102 315 1109 295 1118 291z"/>
        <g clip-path="url(#area)" fill="none" stroke="#232323">
          <g id="rivers"></g>
          <path id="parcels" d="M1184 508V592M1347 560V667M1119 232h8l3-18M1125 215l-2 17 10 2M1122 254l14 1 4-14h-14zM1119 544l22-6 17-25 20 26 6 12h14l-10-22M1289 400v25l16 2 4-32q-14-6-20 5M1281 427l4 20 8-2v-18zM1120 600l7 20 11 3-1 14-10 12M1123 567l-3 33M1163 686q12 24-3 46l-8 19M1139 703h15l-2 10-13 3 8 5 1 22-2 20M1129 770l18-8 21-4-5 22h-8l-8 12-13-5 20-15-7-14M1179 743l1-20 5-7 12 16 8-3-5-19M1237 702h24M1237 702l17-25 16-6 12 8M1147 865h11l7-22-1-17-12-3M1147 865l3-22-3-8-13-1M1354 482l46 26 7 1M1393 435l10-6 14 2M1395 436q6 20 24 24M1373 432q20-20 24 0t23-4M1357 462q16 6 14 24l14 2q-4-20 6-26M1264 520l27-15 13 12M1412 222l9 28-8-4-4-26zM1218 283l28-2-8 20 8 12M1232 307l12-12M1217 285q4 20 12 18M1258 546l-8 6 4 20-4 24 4 4-8 20M1306 584l40-27M1238 640h24M1270 650l74-4"/>
          <path id="specks"/>
          <path id="blots" fill="#2c2a33"/>
        </g>
      </svg>
    </section>
  </main>

  <footer class="status">
    <label class="locate"><svg><use href="#search"/></svg><input type="text" placeholder="Type to locate (Ctrl+K)" aria-label="Type to locate"></label>
    <div class="stat">
      <label for="coord">Coordinate</label><input id="coord" class="field coord" type="text" value="198095,7517526">
      <button class="ico ext" aria-label="Toggle extents"><svg><use href="#mouse"/></svg></button>
      <label for="scale">Scale</label><span class="field combo"><select id="scale"><option>1:161071</option></select><i class="drop"></i></span>
      <button class="ico lock" aria-label="Lock scale"><svg><use href="#lock"/></svg></button>
      <label for="mag">Magnifier</label><span class="field spin mag"><input id="mag" type="text" value="100%"><span class="ud"><i class="up"></i><i class="dn"></i></span></span>
      <label for="rot" class="rotl">Rotation</label><span class="field spin rot"><input id="rot" type="text" value="0.0 °"><span class="ud"><i class="up"></i><i class="dn"></i></span></span>
      <label class="render"><input type="checkbox" class="check" checked>Render</label>
      <button class="epsg"><svg><use href="#crs"/></svg>EPSG:31983</button>
      <button class="ico" aria-label="Messages"><svg><use href="#msg"/></svg></button>
    </div>
  </footer>
</div>

<ul class="ctx" role="menu">
  <li><button><svg><use href="#zlay"/></svg><span><u>Z</u>oom to Layer</span></button></li>
  <li><button disabled><svg><use href="#zlay"/></svg><span><u>Z</u>oom to Selection</span></button></li>
  <li><button><svg><use href="#glasses"/></svg><span><u>S</u>how in Overview</span></button></li>
  <li><button><svg><use href="#box"/></svg><span>Show Feature Count</span></button></li>
  <li><button><svg></svg><span>Copy Layer</span></button></li>
  <li><button><svg></svg><span>Re<u>n</u>ame Layer</span></button></li>
  <li class="line"></li>
  <li><button><svg><use href="#dupl"/></svg><span><u>D</u>uplicate Layer</span></button></li>
  <li><button><svg><use href="#reml"/></svg><span><u>R</u>emove Layer…</span></button></li>
  <li class="line"></li>
  <li><button class="hot"><svg><use href="#table"/></svg><span><u>O</u>pen Attribute Table</span></button></li>
  <li><button><svg><use href="#pencil"/></svg><span>Toggle Editing</span></button></li>
  <li><button><svg></svg><span><u>F</u>ilter…</span></button></li>
  <li><button><svg></svg><span>Change Data Source…</span></button></li>
  <li class="line"></li>
  <li><button><svg></svg><span><u>S</u>et Layer Scale Visibility…</span></button></li>
  <li><button><svg></svg><span>Layer CRS</span><i class="ra"></i></button></li>
  <li class="line"></li>
  <li><button><svg></svg><span>Export</span><i class="ra"></i></button></li>
  <li class="line"></li>
  <li><button><svg></svg><span>Styles</span><i class="ra"></i></button></li>
  <li><button><svg></svg><span><u>P</u>roperties…</span></button></li>
</ul>

<svg class="notes" width="1000" height="700" aria-hidden="true">
  <g fill="none" stroke="#fb0007" stroke-width="3"><path d="M799.500 60.500h39v36h-39zM254.500 473.500h271v27h-271z"/><path d="M842 110L951 268M450 500L676 655"/></g>
  <path d="M830 94l19 14-15 10zM432 488l24 7-9 13z" fill="#fb0007"/>
  <g fill="#fb0007" stroke="#111"><circle cx="861" cy="54.500" r="19" fill="#fff"/><circle cx="500" cy="447" r="19" fill="#fff"/><circle cx="861" cy="54.500" r="17.500" stroke="none"/><circle cx="500" cy="447" r="17.500" stroke="none"/></g>
  <text x="861" y="61" class="num">2</text><text x="500" y="453" class="num">1</text>
</svg>
<script src="map.js"></script>
</body>
</html>
```
FILE: styles.css
```css
* { box-sizing: border-box; }
body { margin: 0; height: 100vh; overflow: hidden; background: #efefef; color: #111; font: 13px/19px "DejaVu Sans", sans-serif; }
button, input, select { font: inherit; color: inherit; border: 0; margin: 0; padding: 0; background: none; border-radius: 0; outline: 0; }
h1, h2, ul { margin: 0; padding: 0; font-size: inherit; font-weight: normal; list-style: none; }
u { text-decoration: underline; text-underline-offset: 3px; text-decoration-skip-ink: none; }
svg { flex: none; display: block; }
.sprite { display: none; }
.app { height: 100vh; display: flex; flex-direction: column; }

.t-a { font: 13px "DejaVu Sans", sans-serif; fill: #555; }
.t-s { font: bold 8px "DejaVu Sans", sans-serif; fill: #555; }
.t-i { font: italic bold 18px "DejaVu Serif", serif; fill: #fff; }
.t-T { font: bold 15px "DejaVu Serif", serif; fill: #555; }
.t-b { font: bold 8px "DejaVu Sans", sans-serif; fill: #444; }
.t-red { fill: #e22; }
.t-q { font: 16px "DejaVu Serif", serif; fill: #fff; }
.t-db { font: 10px "DejaVu Sans", sans-serif; fill: #e8f0f8; }
.t-e { font: 22px "DejaVu Serif", serif; fill: #6a3f6e; }

.titlebar { height: 38px; background: #353535; border-top: 1px solid #222; border-bottom: 1px solid #262626; display: grid; grid-template-columns: 1fr auto 1fr; align-items: center; color: #f4f4f4; flex: none; }
.titlebar h1 { grid-column: 2; font: 500 14px/36px Roboto, sans-serif; }
.winbtns { justify-self: end; display: flex; align-items: center; gap: 20px; padding-right: 9px; }
.min { width: 8px; height: 10px; border-bottom: 2px solid #eee; }
.close { width: 18px; height: 18px; border-radius: 9px; background: #f08437; }
.close svg { width: 18px; height: 18px; }

.menubar { height: 22px; flex: none; display: flex; gap: 15px; padding-left: 10px; border-bottom: 1px solid #d0d0d0; background: #efefef; line-height: 21px; }
.toolrow { height: 39px; flex: none; display: flex; align-items: center; border-bottom: 1px solid #b8b8b8; background: linear-gradient(#f9f9f9, #ececec); }
.last { height: 38px; }
.toolbar { display: flex; align-items: center; padding-right: 3px; }
.grip { width: 13px; height: 18px; flex: none; background: repeating-linear-gradient(#b9b9b9 0 1px, transparent 1px 3px) 5px 0 / 1px 18px no-repeat, repeating-linear-gradient(#b9b9b9 0 1px, transparent 1px 3px) 8px 0 / 1px 18px no-repeat; }
.toolbar:first-child .grip { width: 12px; }
.toolbar button { width: 33px; height: 31px; display: flex; align-items: center; justify-content: center; }
.toolbar button svg { width: 24px; height: 24px; }
.toolbar button:disabled svg { opacity: .35; filter: grayscale(.6); }
.toolbar .on { background: #dcdcdc; border: 1px solid #b4b4b4; border-radius: 2px; }
.drop { width: 12px; display: flex; justify-content: center; flex: none; }
.drop::before { content: ""; border: 4px solid transparent; border-top-color: #555; border-bottom: 0; }
.dim { opacity: .4; }
.sep { width: 7px; height: 20px; background: linear-gradient(#cfcfcf, #cfcfcf) 3px 0 / 1px 20px no-repeat; }

.work { flex: 1; min-height: 0; display: flex; gap: 6px; padding-right: 1px; }
.docks { width: 295px; flex: none; display: flex; flex-direction: column; }
.dock { display: flex; flex-direction: column; }
.browser { flex: none; height: 461px; }
.layers { flex: 1; min-height: 0; }
.dockhead { height: 20px; flex: none; display: flex; align-items: center; padding: 0 2px 0 4px; gap: 3px; }
.dockhead h2 { flex: 1; }
.dockhead svg { width: 11px; height: 11px; }
.docktools { height: 31px; flex: none; display: flex; align-items: center; padding-left: 3px; }
.docktools button { width: 25px; display: flex; justify-content: center; }
.docktools svg { width: 15px; height: 15px; }
.tree { flex: 1; background: #fff; border: 1px solid #b4b4b4; }
.tree li { height: 19px; display: flex; align-items: center; white-space: nowrap; }
.tree li svg { width: 16px; height: 16px; margin-right: 6px; }
.tree li i { width: 23px; flex: none; padding-left: 8px; }
.tree .child { padding-left: 20px; }
.shut::before { content: ""; display: block; width: 0; border: 4px solid transparent; border-left-color: #555; border-right: 0; }
.openi::before { content: ""; display: block; width: 0; margin-left: -2px; border: 4px solid transparent; border-top-color: #555; border-bottom: 0; }
.splitter { height: 6px; flex: none; background: repeating-linear-gradient(90deg, #bbb 0 1px, transparent 1px 3px) 141px 3px / 16px 1px no-repeat; }
.layerbox { flex: 1; min-height: 0; background: #fff; border: 1px solid #b4b4b4; display: flex; flex-direction: column; justify-content: space-between; }
.layer { height: 19px; background: #308cc6; color: #fff; display: flex; align-items: center; padding-left: 23px; overflow: hidden; }
.check { appearance: none; width: 14px; height: 14px; flex: none; background: #fff; border: 1px solid #aaa; display: flex; justify-content: center; }
.check:checked::after { content: ""; width: 5px; height: 9px; border: solid #111; border-width: 0 2px 2px 0; transform: rotate(38deg); }
.swatch { width: 16px; height: 16px; flex: none; margin: 0 6px; background: #7a81bf; border: 1px solid #555a8c; }
.lname { font-weight: bold; text-decoration: underline; text-underline-offset: 3px; white-space: nowrap; }
.hscroll { height: 14px; display: flex; border-top: 1px solid #b4b4b4; background: #e3e3e3; }
.hscroll button { width: 14px; display: flex; align-items: center; justify-content: center; background: #f8f8f8; }
.hscroll span { width: 228px; margin-right: auto; border: solid #b4b4b4; border-width: 0 1px; background: linear-gradient(#fff, #f0f0f0); }
.hscroll button:last-child { border-left: 1px solid #b4b4b4; }
.la, .ra { border: 4px solid transparent; }
.la { border-right-color: #444; border-left: 0; }
.ra { border-left-color: #444; border-right: 0; }
.canvas { flex: 1; min-width: 0; border: 1px solid #b4b4b4; background: #fff; margin-top: 1px; overflow: hidden; }
.map { width: 100%; height: 100%; }

.status { height: 31px; flex: none; display: flex; justify-content: space-between; align-items: center; padding: 1px 6px 0 4px; font-size: 11px; }
.locate { width: 270px; height: 25px; display: flex; align-items: center; gap: 7px; padding-left: 8px; background: #fff; border: 1px solid #aaa; border-radius: 3px; font-size: 13px; }
.locate svg { width: 13px; height: 13px; }
.locate input { flex: 1; }
.locate input::placeholder { color: #808080; }
.stat { display: flex; align-items: center; gap: 4px; }
.field { height: 23px; background: #fff; border: 1px solid #aaa; border-radius: 3px; display: flex; align-items: center; }
.field input, .field select { flex: 1; min-width: 0; appearance: none; padding-left: 4px; }
.coord { width: 110px; text-align: center; }
.combo { width: 97px; }
.combo .drop { width: 19px; height: 21px; align-items: center; border-left: 1px solid #c4c4c4; background: #f6f6f6; }
.mag { width: 97px; }
.rot { width: 94px; }
.ud { width: 14px; height: 21px; border-left: 1px solid #c4c4c4; display: flex; flex-direction: column; align-items: center; justify-content: center; gap: 4px; }
.up { border: 4px solid transparent; border-bottom-color: #555; border-top: 0; }
.dn { border: 4px solid transparent; border-top-color: #555; border-bottom: 0; }
.rotl { padding: 0 5px 0 6px; }
.render { display: flex; align-items: center; gap: 5px; margin-left: 3px; }
.ico { width: 17px; display: flex; justify-content: center; }
.ico svg, .epsg svg { width: 15px; height: 15px; }
.ext { width: 25px; }
.lock { width: 26px; }
.epsg { display: flex; align-items: center; gap: 3px; margin: 0 18px 0 12px; }

.ctx { position: absolute; left: 257px; top: 270px; width: 270px; background: #fff; border: 1px solid #999; box-shadow: 1px 1px 1px #bbb; }
.ctx button { width: 100%; height: 25px; display: flex; align-items: center; padding: 0 5px 0 7px; text-align: left; }
.ctx button svg { width: 16px; height: 16px; margin-right: 4px; }
.ctx button span { flex: 1; }
.ctx button:disabled { color: #bebebe; }
.ctx button:disabled svg { opacity: .35; }
.ctx .hot { background: #308cc6; color: #fff; }
.line { height: 2px; margin: 0 4px; border-top: 1px solid #bbb; }
.notes { position: absolute; left: 0; top: 0; pointer-events: none; }
.num { font: bold 18px "DejaVu Sans", sans-serif; fill: #fff; text-anchor: middle; }
```
FILE: map.js
```js
// Land-use detail of the map: river banks and small patches, drawn from a fixed seed.
let seed = 7;
const rnd = () => (seed = (seed * 16807) % 2147483647) / 2147483647;
const jit = a => (rnd() - 0.5) * a;

// Round the boundary where its vertices are close together; long straight edges keep their corners.
const outline = document.getElementById("outline");
const v = outline.getAttribute("d").match(/\d+/g).map(Number);
const pts = [];
for (let i = 0; i < v.length; i += 2) pts.push([v[i], v[i + 1]]);
let ring = "";
pts.forEach((p, i) => {
  const a = pts[(i + pts.length - 1) % pts.length], b = pts[(i + 1) % pts.length];
  const near = Math.hypot(p[0] - a[0], p[1] - a[1]) < 26 && Math.hypot(b[0] - p[0], b[1] - p[1]) < 26;
  const m = [(p[0] + b[0]) / 2, (p[1] + b[1]) / 2];
  ring += i === 0 ? `M${p}` : near ? `Q${p} ${m}` : `L${p}L${m}`;
});
outline.setAttribute("d", ring + "z");

// Each river: stroke width, roughness, points.
const rivers = [
  [1, 1, "1119 232 1129 239 1143 242 1159 248 1158 268 1150 275 1153 285 1160 297"],
  [2.4, 5, "1158 292 1160 297 1170 312 1180 327 1175 350 1182 365 1194 372 1199 393 1206 410 1194 433 1182 460 1180 483 1155 490 1143 507 1119 540 1109 563 1112 575 1102 593"],
  [1.8, 4, "1102 593 1111 605 1112 633 1127 650 1125 677 1137 687 1129 710 1125 727 1130 740 1121 750 1129 767 1134 790 1120 795 1123 808 1120 823 1132 827 1134 837 1125 850 1111 857 1093 850 1071 857 1075 867 1068 873 1075 882 1062 888 1057 903 1046 910 1018 908 1009 897"],
  [1.2, 7, "1158 292 1170 312 1180 327 1175 350 1182 365 1194 372 1206 410 1182 460 1180 483 1155 490 1119 540 1109 563 1102 593"],
  [1.2, 7, "1111 605 1112 633 1127 650 1125 677 1137 687 1125 727 1121 750"],
  [2.4, 3, "950 558 952 577 957 588 961 600 973 610 965 620 971 635 981 640 985 659 976 663 984 667 987 687 992 702 985 705 975 717 975 730 980 740 970 745 971 758 980 768 986 777 1000 773 1007 782 1015 783 1018 815 1021 835 1013 843 1004 858 996 856 987 862 993 875 983 878 987 895 970 903 975 922 990 926 1010 915"],
  [1.3, 4, "940 440 941 447 940 467 932 473 940 497 949 520 952 557"],
  [1.6, 5, "1255 460 1238 487 1240 507 1262 520 1267 540 1264 573 1264 610 1252 625 1237 640 1237 677 1223 693 1216 717 1216 740"],
  [1.2, 7, "1267 540 1264 573 1264 610 1252 625 1237 677 1223 693 1216 730"],
  [1.5, 3, "1252 625 1270 640 1290 645 1295 640"],
  [1.3, 4, "1233 307 1240 318 1252 330 1260 350 1264 363"],
  [1.3, 6, "1340 217 1337 237 1359 250 1364 273 1378 283"],
  [1.3, 4, "1305 393 1303 427 1303 447 1291 457 1308 473 1318 492 1315 513 1293 543 1267 540"],
  [1.3, 4, "1359 402 1361 420 1373 432 1364 453 1349 480 1342 495 1318 492"],
  [1.6, 2, "1342 500 1381 505 1373 510 1385 522"],
  [1.6, 2, "1327 412 1345 420 1361 422"],
  [1.6, 2, "1030 743 1048 762 1059 773 1070 780 1082 790 1084 805"],
  [1.4, 2, "1053 835 1070 840 1075 850 1093 848 1111 857"],
  [1.4, 3, "1018 908 1032 914 1041 937 1055 943 1055 958 1046 960 1040 948"],
  [1.4, 3, "986 925 1005 935 1010 948 1030 955 1035 968"],
  [1.5, 2, "1045 650 1050 660 1065 663 1088 655 1115 666"],
  [1.3, 3, "1029 735 1033 722 1048 716"],
  [1.3, 4, "1187 775 1181 785 1166 788 1164 797"],
  [1.3, 6, "832 480 850 490 870 480 880 466"],
  [1.3, 5, "887 445 890 470 905 482 920 478 915 455 905 440"],
  [1.3, 6, "892 547 905 553 935 551 945 540"],
  [1.3, 6, "1040 458 1060 478 1073 473 1085 488 1110 488"],
  [1.3, 4, "1117 460 1117 500 1125 505"]
];
function roughen(points, rough) {
  const p = points.split(" ").map(Number);
  let d = `M${p[0]} ${p[1]}`;
  for (let i = 2; i < p.length; i += 2) {
    const dx = p[i] - p[i - 2], dy = p[i + 1] - p[i - 1];
    const n = Math.max(1, Math.round(Math.hypot(dx, dy) / 3));
    for (let k = 1; k <= n; k++)
      d += `L${(p[i - 2] + dx * k / n + jit(rough)).toFixed(1)} ${(p[i - 1] + dy * k / n + jit(rough)).toFixed(1)}`;
  }
  return d;
}
const g = document.getElementById("rivers");
for (const [w, rough, line] of rivers) {
  const el = document.createElementNS("http://www.w3.org/2000/svg", "path");
  el.setAttribute("d", roughen(line, rough));
  el.setAttribute("stroke-width", w);
  g.append(el);
}

// Zones of small patches: left, top, right, bottom, count, patch size.
const zones = [
  [795, 370, 870, 410, 22, 4], [768, 400, 790, 438, 30, 6], [790, 410, 850, 440, 30, 5], [850, 400, 930, 450, 40, 5],
  [822, 440, 950, 480, 50, 6], [838, 480, 950, 545, 110, 8], [860, 530, 895, 562, 20, 7], [895, 520, 955, 552, 30, 6],
  [945, 440, 1030, 500, 45, 7], [950, 490, 1110, 560, 150, 7], [950, 555, 1100, 600, 70, 6],
  [1030, 440, 1120, 500, 45, 6], [1110, 430, 1185, 505, 90, 6], [1060, 340, 1110, 430, 40, 4],
  [1100, 340, 1170, 430, 60, 4], [1110, 345, 1135, 400, 18, 7], [1190, 420, 1262, 490, 70, 7],
  [1120, 500, 1145, 560, 25, 7], [1172, 500, 1198, 545, 22, 7], [1235, 475, 1265, 525, 36, 7], [1262, 535, 1325, 592, 90, 7],
  [1150, 205, 1200, 235, 14, 4], [1164, 260, 1205, 298, 22, 7], [1180, 310, 1270, 400, 24, 6], [1210, 345, 1250, 375, 16, 7],
  [1120, 200, 1425, 430, 90, 2], [1310, 210, 1380, 270, 26, 5], [1350, 240, 1370, 285, 20, 6],
  [1290, 270, 1425, 310, 24, 5], [1375, 335, 1390, 365, 12, 6], [1400, 350, 1425, 385, 9, 6], [1298, 390, 1308, 450, 12, 5],
  [1340, 430, 1420, 480, 12, 5], [1300, 450, 1410, 560, 24, 3],
  [955, 590, 1110, 650, 60, 4], [1040, 590, 1110, 655, 45, 6], [985, 650, 1120, 740, 30, 4],
  [1115, 650, 1145, 720, 20, 6], [970, 730, 1020, 780, 20, 6], [1030, 740, 1125, 830, 18, 4],
  [1050, 810, 1075, 825, 10, 6], [1120, 805, 1165, 825, 40, 6], [1020, 825, 1160, 900, 50, 4],
  [1055, 845, 1080, 875, 16, 6], [1090, 845, 1125, 865, 20, 5], [1000, 895, 1070, 990, 50, 5],
  [1080, 890, 1190, 950, 26, 5], [1150, 895, 1168, 915, 16, 6], [1060, 945, 1110, 990, 9, 4],
  [1210, 680, 1235, 740, 30, 6], [1255, 590, 1345, 660, 45, 2], [1280, 635, 1300, 685, 24, 6],
  [1305, 660, 1345, 680, 16, 4], [1395, 590, 1440, 640, 40, 6], [1347, 560, 1410, 620, 14, 5]
];
let lines = "", fills = "";
for (const [x0, y0, x1, y1, count, size] of zones)
  for (let i = 0; i < count; i++) {
    let x = x0 + rnd() * (x1 - x0), y = y0 + rnd() * (y1 - y0);
    // A winding strip in the dense zones, a lumpy patch elsewhere.
    if (size > 5 && rnd() < 0.35) {
      let a = rnd() * 6.283, d = `M${x.toFixed(1)} ${y.toFixed(1)}`;
      for (let k = 0; k < size * 1.6; k++) {
        a += jit(2.6);
        x += Math.cos(a) * 2; y += Math.sin(a) * 2;
        d += `L${x.toFixed(1)} ${y.toFixed(1)}`;
      }
      lines += d + (rnd() < 0.5 ? "z" : "");
      continue;
    }
    const tilt = -0.4 - rnd() * 2, flat = 0.2 + rnd() * 0.4, scale = size * (0.25 + rnd() * 0.6);
    const n = 6 + Math.floor(rnd() * 5);
    let d = "";
    for (let k = 0; k < n; k++) {
      const a = k / n * 6.283, r = scale * (0.4 + rnd() * 0.7);
      const px = Math.cos(a) * r, py = Math.sin(a) * r * flat;
      d += (k ? "L" : "M") + (x + px * Math.cos(tilt) - py * Math.sin(tilt)).toFixed(1) + " " + (y + px * Math.sin(tilt) + py * Math.cos(tilt)).toFixed(1);
    }
    if (rnd() < 0.25 && scale < 4) fills += d + "z"; else lines += d + "z";
  }
document.getElementById("specks").setAttribute("d", lines);
document.getElementById("blots").setAttribute("d", fills);
```
